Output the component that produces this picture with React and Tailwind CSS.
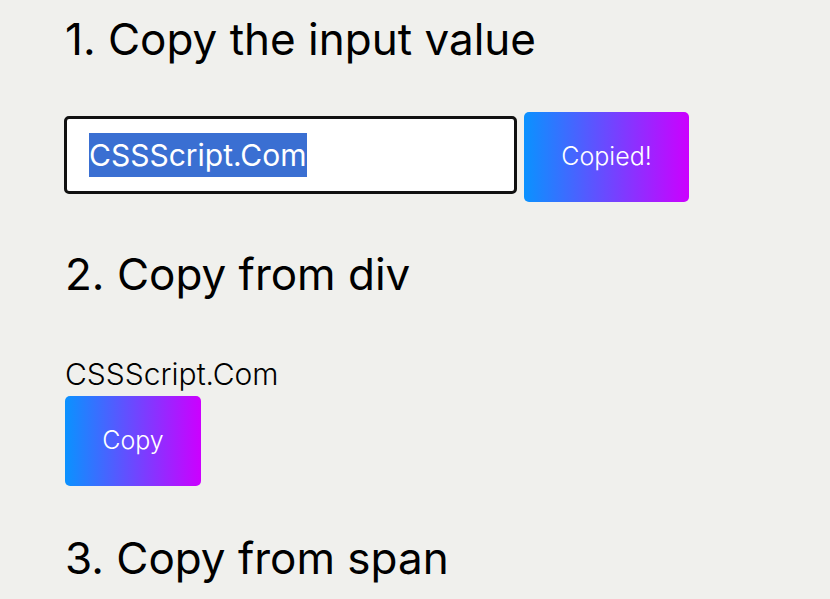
import React from 'react';

const btn = 'bg-[linear-gradient(to_right,#0a92ff,#cc00ff)] text-white rounded-[5px] font-light';

export default function App() {
  return (
    <div className="min-h-screen bg-[#f0f0ed] text-black font-['Inter',sans-serif] pl-[65px] pt-[12px]">
      <h2 className="text-[44px] leading-[54px]">1. Copy the input value</h2>
      <div className="flex items-start gap-[7px] mt-[46px] -ml-[1px]">
        <div className="mt-[4px] w-[453px] h-[78px] border-[3px] border-[#111] rounded-[5px] bg-white flex items-center pl-[22px]">
          <span className="bg-[#3a6fd2] text-white text-[30px] leading-[44px]">CSSScript.Com</span>
        </div>
        <button className={`${btn} w-[165px] h-[90px] text-[25px]`}>Copied!</button>
      </div>
      <h2 className="text-[44px] leading-[54px] mt-[45px]">2. Copy from div</h2>
      <div className="text-[30px] font-light leading-[36px] mt-[55px]">CSSScript.Com</div>
      <button className={`${btn} w-[136px] h-[90px] text-[25px] mt-[4px]`}>Copy</button>
      <h2 className="text-[44px] leading-[54px] mt-[45px]">3. Copy from span</h2>
    </div>
  );
}
